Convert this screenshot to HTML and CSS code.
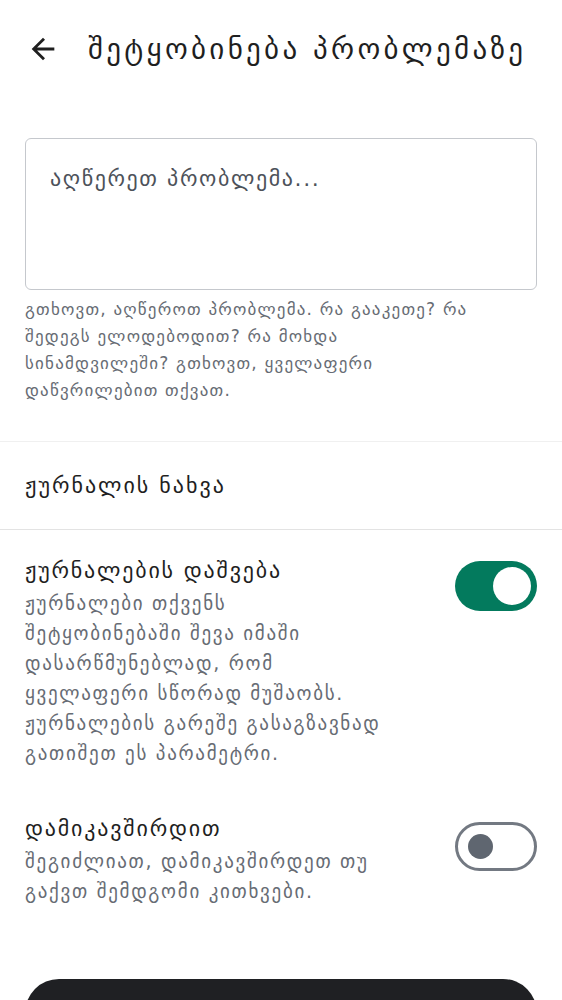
FILE: index.html
```html
<!DOCTYPE html>
<html lang="ka">
<head>
<meta charset="utf-8">
<link rel="stylesheet" href="styles.css">
</head>
<body>
<div class="page">
  <header class="topbar">
    <svg class="back" width="34" height="34" viewBox="0 0 24 24" aria-hidden="true"><path d="M20 11H7.83l5.59-5.59L12 4l-8 8 8 8 1.41-1.41L7.83 13H20v-2z" fill="#1f1f1f"/></svg>
    <h1 class="title">შეტყობინება პრობლემაზე</h1>
  </header>

  <section class="form">
    <div class="textarea">აღწერეთ პრობლემა...</div>
    <p class="helper">გთხოვთ, აღწეროთ პრობლემა. რა გააკეთე? რა<br>შედეგს ელოდებოდით? რა მოხდა<br>სინამდვილეში? გთხოვთ, ყველაფერი<br>დაწვრილებით თქვათ.</p>
  </section>

  <div class="row link">ჟურნალის ნახვა</div>

  <div class="setting first">
    <div class="texts">
      <div class="stitle">ჟურნალების დაშვება</div>
      <div class="sdesc">ჟურნალები თქვენს<br>შეტყობინებაში შევა იმაში<br>დასარწმუნებლად, რომ<br>ყველაფერი სწორად მუშაობს.<br>ჟურნალების გარეშე გასაგზავნად<br>გათიშეთ ეს პარამეტრი.</div>
    </div>
    <div class="switch on"><span class="knob"></span></div>
  </div>

  <div class="setting second">
    <div class="texts">
      <div class="stitle">დამიკავშირდით</div>
      <div class="sdesc">შეგიძლიათ, დამიკავშირდეთ თუ<br>გაქვთ შემდგომი კითხვები.</div>
    </div>
    <div class="switch off"><span class="knob"></span></div>
  </div>

  <div class="button"></div>
</div>
</body>
</html>
```

FILE: styles.css
```css
* { box-sizing: border-box; }
html, body { margin: 0; padding: 0; background: #fff; }
body {
  font-family: "DejaVu Sans", sans-serif;
  color: #1f1f1f;
  overflow: hidden;
  height: 1000px;
}
.page { width: 562px; height: 1000px; overflow: hidden; }
.topbar {
  display: flex;
  align-items: center;
  height: 102px;
  padding: 0 0 4px 26px;
}
.back { flex: none; }
.title {
  margin: 0 0 0 28px;
  font-size: 29px;
  letter-spacing: 3.3px;
  font-weight: 400;
  white-space: nowrap;
}
.form { padding: 36px 25px 0; }
.textarea {
  height: 152px;
  border: 1.5px solid #c5c8cd;
  border-radius: 6px;
  padding: 27px 24px;
  font-size: 22px;
  letter-spacing: 1.6px;
  color: #4d525a;
  white-space: nowrap;
}
.helper {
  margin: 6px 0 0;
  font-size: 17px;
  line-height: 27px;
  letter-spacing: 1.2px;
  color: #676c74;
  white-space: nowrap;
}
.row.link {
  margin-top: 37px;
  border-top: 1px solid #f0f0f0;
  border-bottom: 1px solid #e3e3e3;
  height: 89px;
  display: flex;
  align-items: center;
  padding: 0 25px;
  font-size: 22px;
  letter-spacing: 2px;
}
.setting {
  display: flex;
  justify-content: space-between;
  align-items: flex-start;
  padding: 24px 25px 0;
}
.setting.second { padding-top: 44px; }
.texts { flex: 1; min-width: 0; }
.stitle { font-size: 22px; line-height: 34px; letter-spacing: 1.8px; white-space: nowrap; }
.sdesc { font-size: 19px; line-height: 30px; letter-spacing: 1.7px; color: #676c74; white-space: nowrap; }
.switch {
  flex: none;
  width: 82px;
  height: 50px;
  border-radius: 25px;
  display: flex;
  align-items: center;
}
.switch.on { background: #037a5d; justify-content: flex-end; padding: 0 6px; margin-top: 7px; }
.switch.on .knob { width: 38px; height: 38px; border-radius: 50%; background: #fff; }
.switch.off { border: 3px solid #737982; padding: 0 10px; margin-top: 10px; height: 49px; }
.switch.off .knob { width: 25px; height: 25px; border-radius: 50%; background: #5f6670; }
.button {
  margin: 73px 25px 0;
  height: 100px;
  background: #1f2023;
  border-radius: 34px;
}
```
